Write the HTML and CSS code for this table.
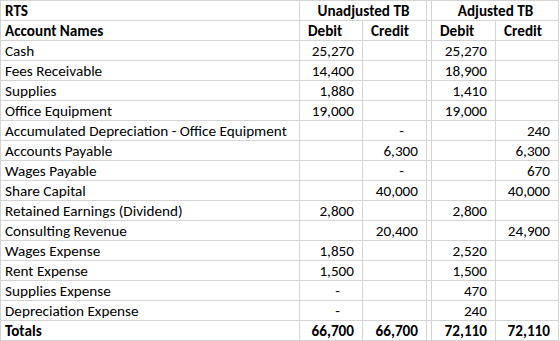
FILE: index.html
```html
<!DOCTYPE html>
<html>
<head>
<meta charset="utf-8">
<link rel="stylesheet" href="styles.css">
</head>
<body>
<table class="sheet">
  <colgroup>
    <col class="c-name">
    <col class="c-num">
    <col class="c-num2">
    <col class="c-gap">
    <col class="c-num2">
    <col class="c-num">
  </colgroup>
  <tbody>
    <tr class="bold">
      <td>RTS</td>
      <td colspan="2" class="center">Unadjusted TB</td>
      <td></td>
      <td colspan="2" class="center">Adjusted TB</td>
    </tr>
    <tr class="bold">
      <td>Account Names</td>
      <td class="head">Debit</td>
      <td class="head">Credit</td>
      <td></td>
      <td class="head">Debit</td>
      <td class="head">Credit</td>
    </tr>
    <tr><td>Cash</td><td class="num">25,270</td><td></td><td></td><td class="num">25,270</td><td></td></tr>
    <tr><td>Fees Receivable</td><td class="num">14,400</td><td></td><td></td><td class="num">18,900</td><td></td></tr>
    <tr><td>Supplies</td><td class="num">1,880</td><td></td><td></td><td class="num">1,410</td><td></td></tr>
    <tr><td>Office Equipment</td><td class="num">19,000</td><td></td><td></td><td class="num">19,000</td><td></td></tr>
    <tr><td>Accumulated Depreciation - Office Equipment</td><td></td><td class="num dash">-</td><td></td><td></td><td class="num">240</td></tr>
    <tr><td>Accounts Payable</td><td></td><td class="num">6,300</td><td></td><td></td><td class="num">6,300</td></tr>
    <tr><td>Wages Payable</td><td></td><td class="num dash">-</td><td></td><td></td><td class="num">670</td></tr>
    <tr><td>Share Capital</td><td></td><td class="num">40,000</td><td></td><td></td><td class="num">40,000</td></tr>
    <tr><td>Retained Earnings (Dividend)</td><td class="num">2,800</td><td></td><td></td><td class="num">2,800</td><td></td></tr>
    <tr><td>Consulting Revenue</td><td></td><td class="num">20,400</td><td></td><td></td><td class="num">24,900</td></tr>
    <tr><td>Wages Expense</td><td class="num">1,850</td><td></td><td></td><td class="num">2,520</td><td></td></tr>
    <tr><td>Rent Expense</td><td class="num">1,500</td><td></td><td></td><td class="num">1,500</td><td></td></tr>
    <tr><td>Supplies Expense</td><td class="num dash">-</td><td></td><td></td><td class="num">470</td><td></td></tr>
    <tr><td>Depreciation Expense</td><td class="num dash">-</td><td></td><td></td><td class="num">240</td><td></td></tr>
    <tr class="bold totals"><td>Totals</td><td class="num">66,700</td><td class="num">66,700</td><td class="gap"></td><td class="num">72,110</td><td class="num">72,110</td></tr>
  </tbody>
</table>
</body>
</html>
```
FILE: styles.css
```css
html, body {
  margin: 0;
  padding: 0;
  background: #ffffff;
}

.sheet {
  border-collapse: collapse;
  table-layout: fixed;
  width: 559px;
  font-family: Carlito, Lato, "Open Sans", sans-serif;
  font-size: 15.2px;
  color: #000000;
}

.c-name { width: 299px; }
.c-num { width: 63px; }
.c-num2 { width: 64px; }
.c-gap { width: 5px; }

.sheet td {
  border: 1px solid #d4d4d4;
  height: 19px;
  padding: 0 3px 0 4px;
  line-height: 17px;
  white-space: nowrap;
  overflow: hidden;
  vertical-align: bottom;
  box-sizing: border-box;
}

.sheet tr {
  height: 20px;
}

.bold td {
  font-weight: bold;
}

.center {
  text-align: center;
}

.sheet td.head {
  padding-left: 8px;
}

.sheet td.num {
  text-align: right;
  padding-right: 8px;
}

.sheet td.dash {
  padding-right: 22px;
}

.totals td {
  border-top: 1px solid #000000;
}

.sheet .totals td:first-child,
.sheet .totals td.gap {
  border-top: 1px solid #d4d4d4;
}
```
